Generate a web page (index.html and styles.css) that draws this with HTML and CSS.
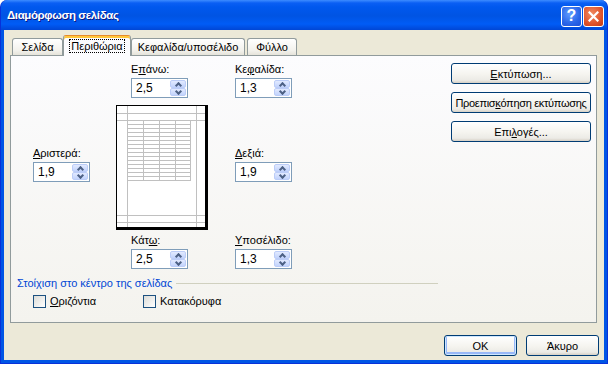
FILE: index.html
```html
<!DOCTYPE html>
<html lang="el">
<head>
    <meta charset="UTF-8">
    <title>Διαμόρφωση σελίδας</title>
    <link rel="stylesheet" href="styles.css">
</head>
<body>
    <div class="window">
        <div class="titlebar">
            <span class="title">Διαμόρφωση σελίδας</span>
            <div class="caption-buttons">
                <span class="cap-btn help">?</span>
                <span class="cap-btn close">
                    <svg width="11" height="11" viewBox="0 0 11 11"><path d="M1.5 1.5L9.5 9.5M9.5 1.5L1.5 9.5" stroke="#fff" stroke-width="2.2" stroke-linecap="square"/></svg>
                </span>
            </div>
        </div>

        <div class="client">
            <div class="tabs">
                <div class="tab t1">Σελίδα</div>
                <div class="tab active"><span class="focus">Περιθώρια</span></div>
                <div class="tab t3">Κεφαλίδα/υποσέλιδο</div>
                <div class="tab t4">Φύλλο</div>
            </div>

            <div class="panel">
                <div class="margins">
                    <div class="grid">
                        <div class="cell"></div>
                        <div class="field mid">
                            <label>Ε<u>π</u>άνω:</label>
                            <div class="spin"><span class="value">2,5</span><span class="spin-btns"><span class="up"></span><span class="down"></span></span></div>
                        </div>
                        <div class="field">
                            <label>Κε<u>φ</u>αλίδα:</label>
                            <div class="spin"><span class="value">1,3</span><span class="spin-btns"><span class="up"></span><span class="down"></span></span></div>
                        </div>

                        <div class="field side">
                            <label><u>Α</u>ριστερά:</label>
                            <div class="spin"><span class="value">1,9</span><span class="spin-btns"><span class="up"></span><span class="down"></span></span></div>
                        </div>
                        <svg class="preview" width="92" height="125" viewBox="0 0 92 125">
                            <rect x="0" y="0" width="92" height="125" fill="#000"/>
                            <rect x="1" y="1" width="88" height="121" fill="#fff"/>
                            <g stroke="#c0c0c0" stroke-width="1" fill="none">
                                <path d="M11.5 1V122M80.5 1V122M1 8.5H89M1 15.5H89M1 110.5H89M1 117.5H89"/>
                                <path d="M27.5 15V76M43.5 15V76M59.5 15V76M74.5 15V76"/>
                                <path d="M11 19.5H75M11 23.5H75M11 27.5H75M11 31.5H75M11 35.5H75M11 39.5H75M11 43.5H75M11 47.5H75M11 51.5H75M11 55.5H75M11 59.5H75M11 63.5H75M11 67.5H75M11 71.5H75M11 75.5H75"/>
                            </g>
                        </svg>
                        <div class="field side">
                            <label><u>Δ</u>εξιά:</label>
                            <div class="spin"><span class="value">1,9</span><span class="spin-btns"><span class="up"></span><span class="down"></span></span></div>
                        </div>

                        <div class="cell"></div>
                        <div class="field mid bottom">
                            <label>Κάτ<u>ω</u>:</label>
                            <div class="spin"><span class="value">2,5</span><span class="spin-btns"><span class="up"></span><span class="down"></span></span></div>
                        </div>
                        <div class="field bottom">
                            <label><u>Υ</u>ποσέλιδο:</label>
                            <div class="spin"><span class="value">1,3</span><span class="spin-btns"><span class="up"></span><span class="down"></span></span></div>
                        </div>
                    </div>

                    <div class="group">
                        <div class="group-title"><span>Στοίχιση στο κέντρο της σελίδας</span></div>
                        <div class="checks">
                            <div class="check c1"><span class="box"></span><span><u>Ο</u>ριζόντια</span></div>
                            <div class="check c2"><span class="box"></span><span>Κατακόρυφα</span></div>
                        </div>
                    </div>
                </div>

                <div class="side-buttons">
                    <button class="btn"><u>Ε</u>κτύπωση...</button>
                    <button class="btn tight">Προεπισ<u>κ</u>όπηση εκτύπωσης</button>
                    <button class="btn">Επι<u>λ</u>ογές...</button>
                </div>
            </div>

            <div class="footer">
                <button class="btn default">OK</button>
                <button class="btn">Άκυρο</button>
            </div>
        </div>
    </div>
</body>
</html>
```

FILE: styles.css
```css
/* Reset styles */
* {
    margin: 0;
    padding: 0;
    box-sizing: border-box;
}

body {
    width: 611px;
    height: 366px;
    overflow: hidden;
    background-color: #fff;
    font-family: 'Liberation Sans', Arial, sans-serif;
    font-size: 11px;
    color: #000;
}

u {
    text-decoration: underline;
    text-underline-offset: 1px;
}

.window {
    width: 608px;
    height: 364px;
    display: flex;
    flex-direction: column;
    background-color: #0055e5;
    border-radius: 7px 7px 0 0;
    border-left: 1px solid #0831d9;
    border-right: 1px solid #0831d9;
    border-bottom: 1px solid #0831d9;
}

/* title bar */
.titlebar {
    height: 30px;
    flex: none;
    display: flex;
    align-items: center;
    justify-content: space-between;
    padding: 0 3px 0 6px;
    border-radius: 7px 7px 0 0;
    background: linear-gradient(#3d8cff 0, #0a5ff4 3px, #0058ee 7px, #0054e3 16px, #005cf6 24px, #0046d5 30px);
}

.title {
    color: #fff;
    font-weight: bold;
    font-size: 11.5px;
    letter-spacing: -0.4px;
    text-shadow: 1px 1px 0 #0a1883;
}

.caption-buttons {
    display: flex;
    gap: 1px;
    margin-top: 2px;
}

.cap-btn {
    width: 21px;
    height: 21px;
    border: 1px solid #fff;
    border-radius: 3px;
    display: flex;
    align-items: center;
    justify-content: center;
    color: #fff;
    font-weight: bold;
    font-size: 16px;
}

.help {
    background: radial-gradient(circle at 40% 35%, #5f9bff, #2a65e8 60%, #1c4fd8);
}

.close {
    background: radial-gradient(circle at 40% 35%, #f08a60, #e0532c 60%, #c23a14);
}

/* client area */
.client {
    flex: 1;
    margin: 0 3px 3px;
    background-color: #ece9d8;
    padding: 5px 0 0 6px;
}

.tabs {
    display: flex;
    align-items: flex-end;
    height: 21px;
    margin-bottom: -1px;
    padding-left: 2px;
    position: relative;
    z-index: 1;
}

.tab {
    height: 17px;
    margin-bottom: 1px;
    border: 1px solid #919b9c;
    border-bottom: none;
    border-radius: 3px 3px 0 0;
    background: linear-gradient(#fff, #f3f2ed 70%, #e5e3da);
    text-align: center;
    line-height: 16px;
}

.t1 { width: 51px; }
.t3 { width: 114px; }
.t4 { width: 50px; margin-left: 2px; }

.tab.active {
    width: 68px;
    height: 21px;
    margin-bottom: 0;
    border-top: 1px solid #e68b2c;
    box-shadow: inset 0 2px 0 #ffc83c;
    background: #fcfcfe;
    padding-top: 3px;
    line-height: 14px;
}

.focus {
    border: 1px dotted #000;
    padding: 0 1px;
}

.panel {
    width: 587px;
    height: 268px;
    display: flex;
    border: 1px solid #919b9c;
    background: linear-gradient(#fcfcfe, #f4f3ee);
}

.margins {
    flex: 1;
    padding: 7px 0 0 6px;
}

.grid {
    display: grid;
    grid-template-columns: 57px 93px 57px;
    column-gap: 26px;
    row-gap: 7px;
    margin-left: 16px;
}

.field label {
    display: block;
    height: 13px;
    line-height: 13px;
    margin-bottom: 2px;
}

.field.mid {
    padding-left: 15px;
}

.field.side {
    margin-top: 42px;
}

.field.bottom {
    margin-top: -3px;
}

.spin {
    width: 57px;
    height: 20px;
    border: 1px solid #7f9db9;
    background-color: #fff;
    display: flex;
    justify-content: space-between;
    padding: 1px;
}

.value {
    font-size: 12px;
    line-height: 17px;
    padding-left: 3px;
}

.spin-btns {
    width: 16px;
    display: flex;
    flex-direction: column;
}

.spin-btns span {
    flex: 1;
    border: 1px solid #bccdf8;
    border-radius: 2px;
    background: linear-gradient(#e2eaff, #c2d3fc);
    position: relative;
}

.spin-btns span::after {
    content: "";
    position: absolute;
    left: 5px;
    width: 3px;
    height: 3px;
    border-left: 2px solid #4d6185;
    border-top: 2px solid #4d6185;
}

.spin-btns .up::after {
    top: 2px;
    transform: rotate(45deg);
}

.spin-btns .down::after {
    top: 0;
    transform: rotate(225deg);
}

.preview {
    display: block;
}

/* centering group */
.group {
    margin-top: 8px;
    width: 421px;
}

.group-title {
    display: flex;
    align-items: center;
    gap: 4px;
    color: #0046d5;
    line-height: 13px;
}

.group-title::after {
    content: "";
    flex: 1;
    height: 1px;
    background-color: #d0d0bf;
}

.checks {
    display: flex;
    margin-top: 5px;
    padding-left: 16px;
}

.check {
    display: flex;
    align-items: center;
    gap: 4px;
    line-height: 13px;
}

.check.c1 {
    width: 110px;
}

.box {
    width: 13px;
    height: 13px;
    border: 1px solid #1c5180;
    background: linear-gradient(135deg, #dcdcd7, #fff);
}

/* buttons */
.side-buttons {
    width: 140px;
    margin: 7px 5px 0 0;
    display: flex;
    flex-direction: column;
    gap: 8px;
}

.btn {
    height: 21px;
    padding: 0;
    white-space: nowrap;
    border: 1px solid #003c74;
    border-radius: 3px;
    background: linear-gradient(#fff, #f5f4ef 55%, #ecebe6 85%, #d6d0c5);
    font-family: 'Liberation Sans', Arial, sans-serif;
    font-size: 11px;
    color: #000;
    text-align: center;
    line-height: 18px;
}

.btn.tight {
    letter-spacing: -0.3px;
}

.footer {
    display: flex;
    justify-content: flex-end;
    gap: 9px;
    margin-top: 12px;
    padding-right: 5px;
}

.footer .btn {
    width: 73px;
}

.btn.default {
    box-shadow: inset 0 0 0 1px #cee7ff, inset 0 -1px 0 2px #98b8f8;
}
```
